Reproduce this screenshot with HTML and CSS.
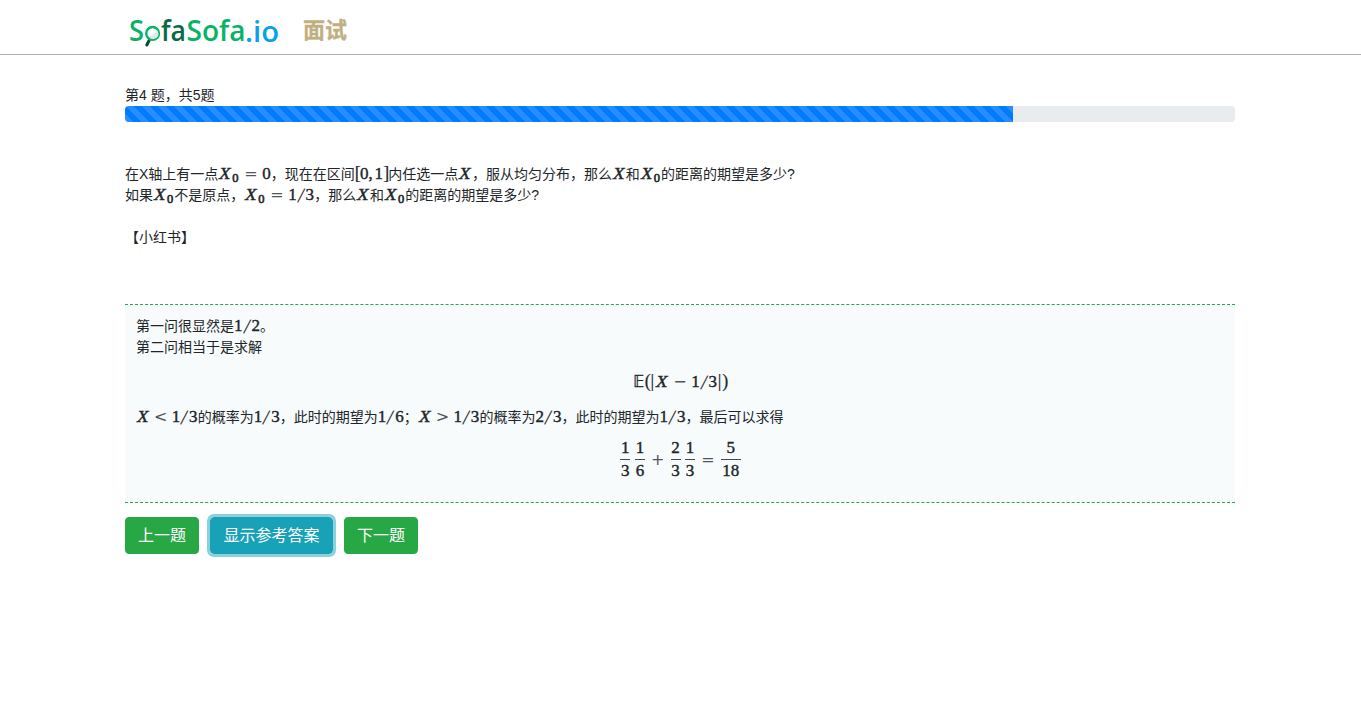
FILE: index.html
```html
<!DOCTYPE html>
<html lang="zh-CN">
<head>
<meta charset="utf-8">
<title>SofaSofa.io 面试</title>
<link rel="stylesheet" href="styles.css">
</head>
<body>
<header class="topbar">
  <div class="container brand">
    <svg class="logo" width="166" height="46" viewBox="0 0 166 46">
      <g class="logo-text">
        <text x="3" y="33" fill="#08b366" textLength="15" lengthAdjust="spacingAndGlyphs">S</text>
        <text x="35" y="33" fill="#0b6b45" textLength="25" lengthAdjust="spacingAndGlyphs">fa</text>
        <text x="60.5" y="33" fill="#08b366" textLength="59" lengthAdjust="spacingAndGlyphs">Sofa</text>
        <text x="119" y="34" fill="#08a2ea" textLength="34" lengthAdjust="spacingAndGlyphs">.io</text>
      </g>
      <path d="M23.2 32.3L20.8 37" stroke="#074a30" stroke-width="3" stroke-linecap="round"/>
      <circle cx="26.6" cy="25.4" r="6.4" fill="#fff" stroke="#08b366" stroke-width="2.4"/>
      <path d="M24 28Q29 26.5 30.5 21.7A5 5 0 0 1 24 30Z" fill="#d9efe5"/>
    </svg>
    <span class="section">面试</span>
  </div>
</header>
<main class="container">
  <p class="count">第4 题，共5题</p>
  <div class="progress"><div class="bar" style="width:80%"></div></div>
  <div class="question">
    <div>在X轴上有一点<span class="m"><i>X</i><sub>0</sub><u>=</u><b>0</b></span>，现在在区间<span class="m"><s>[</s><b>0</b><em>,</em><b>1</b><s>]</s></span>内任选一点<span class="m"><i>X</i></span>，服从均匀分布，那么<span class="m"><i>X</i></span>和<span class="m"><i>X</i><sub>0</sub></span>的距离的期望是多少?</div>
    <div>如果<span class="m"><i>X</i><sub>0</sub></span>不是原点，<span class="m"><i>X</i><sub>0</sub><u>=</u><b>1</b><q>/</q><b>3</b></span>，那么<span class="m"><i>X</i></span>和<span class="m"><i>X</i><sub>0</sub></span>的距离的期望是多少?</div>
    <div class="source">【小红书】</div>
  </div>
  <section class="answer">
    <div>第一问很显然是<span class="m"><b>1</b><q>/</q><b>2</b></span>。</div>
    <div>第二问相当于是求解</div>
    <div class="display"><span class="m"><span class="bb">𝔼</span><s>(</s><s>|</s><i>X</i><u>−</u><b>1</b><q>/</q><b>3</b><s>|</s><s>)</s></span></div>
    <div class="cases"><span class="m"><i>X</i><u>&lt;</u><b>1</b><q>/</q><b>3</b></span>的概率为<span class="m"><b>1</b><q>/</q><b>3</b></span>，此时的期望为<span class="m"><b>1</b><q>/</q><b>6</b></span>；<span class="m"><i>X</i><u>&gt;</u><b>1</b><q>/</q><b>3</b></span>的概率为<span class="m"><b>2</b><q>/</q><b>3</b></span>，此时的期望为<span class="m"><b>1</b><q>/</q><b>3</b></span>，最后可以求得</div>
    <div class="equation">
      <span class="frac"><span>1</span><span>3</span></span>
      <span class="frac"><span>1</span><span>6</span></span>
      <span class="op">+</span>
      <span class="frac"><span>2</span><span>3</span></span>
      <span class="frac"><span>1</span><span>3</span></span>
      <span class="op">=</span>
      <span class="frac wide"><span>5</span><span>18</span></span>
    </div>
  </section>
  <div class="actions">
    <button class="btn">上一题</button>
    <button class="btn info">显示参考答案</button>
    <button class="btn">下一题</button>
  </div>
</main>
</body>
</html>
```
FILE: styles.css
```css
* { box-sizing: border-box; }
body {
  margin: 0;
  background: #fff;
  color: #212529;
  font: 14px/21px "Liberation Sans", "Noto Sans CJK SC", sans-serif;
}
.container { width: 1110px; margin-left: 125px; }
.topbar { height: 55px; border-bottom: 1px solid #b3b3b3; }
.brand { display: flex; align-items: flex-start; padding-top: 8px; }
.logo { display: block; margin-left: 1px; flex: none; overflow: visible; }
.logo-text { font: 600 28.5px "Open Sans", sans-serif; }
.section {
  margin-left: 11px;
  padding-top: 3px;
  color: #bfb083;
  font: 700 22px/34px "Noto Sans CJK SC", sans-serif;
  -webkit-text-stroke: .3px;
}
.count { margin: 30px 0 0; }
.progress {
  height: 16px;
  overflow: hidden;
  border-radius: 4px;
  background: #e9ecef;
}
.bar {
  height: 100%;
  background: #007bff linear-gradient(45deg, rgba(255,255,255,.15) 25%, transparent 25%, transparent 50%, rgba(255,255,255,.15) 50%, rgba(255,255,255,.15) 75%, transparent 75%, transparent) 0 0 / 16px 16px;
}
.question { padding-top: 42px; height: 182px; }
.question > div, .answer > div { white-space: nowrap; height: 21px; }
.question .source { margin-top: 21px; }

.m {
  display: inline-flex;
  align-items: baseline;
  vertical-align: baseline;
  font-family: "Liberation Serif", serif;
  font-size: 17px;
  -webkit-text-stroke: .4px currentColor;
}
.m > * { display: block; text-align: center; line-height: 14px; }
.m i { width: 13.8px; font-size: 17.5px; transform: scaleX(1.08); }
.m b { width: 8.7px; font-weight: 400; }
.m q { width: 8.7px; quotes: none; font-size: 20px; transform: translateY(2px) skewX(-10deg); -webkit-text-stroke: .2px; }
.m sub { width: 7.5px; font-size: 12.5px; position: relative; top: 3px; left: -.5px; vertical-align: baseline; -webkit-text-stroke: .6px; }
.m u { width: 22.5px; text-decoration: none; font: 16px/14px "DejaVu Sans", sans-serif; -webkit-text-stroke: 0; color: #50555a; }
.m s { width: 5px; text-decoration: none; font-size: 18px; -webkit-text-stroke: .2px; }
.m em { width: 6px; font-style: normal; text-align: left; }
.m .bb { width: 12px; font: 15px/14px "DejaVu Sans", sans-serif; -webkit-text-stroke: .3px; }

.answer {
  height: 199px;
  padding: 11px;
  border-top: 1px dashed #35a04c;
  border-bottom: 1px dashed #35a04c;
  background: #f7fbfc;
}
.answer > .display { margin: 14px 0; text-align: center; }
.cases .m u { width: 21.8px; }
.answer > .equation {
  display: flex;
  justify-content: center;
  height: 44px;
  margin-top: 9px;
  padding-left: 1px;
  font: 17px/22px "Liberation Serif", serif;
  -webkit-text-stroke: .4px currentColor;
}
.frac { width: 10px; margin: 0 2.3px; text-align: center; }
.frac > span { display: block; height: 22px; }
.frac > span:first-child { height: 23px; border-bottom: 1px solid #45494d; }
.wide { width: 20px; }
.op { width: 21px; text-align: center; font: 16px/45px "DejaVu Sans", sans-serif; -webkit-text-stroke: 0; color: #50555a; }
.actions { display: flex; gap: 11px; padding: 14px 0 20px; }
.btn {
  width: 74px;
  height: 37px;
  padding: 4px 0 7px;
  border: 1px solid #28a745;
  border-radius: 4px;
  background: #28a745;
  color: #fff;
  font: 16px/24px "Noto Sans CJK SC", sans-serif;
}
.info { width: 123px; background: #17a2b8; border-color: #17a2b8; outline: 3px solid #8bd0db; }
```
